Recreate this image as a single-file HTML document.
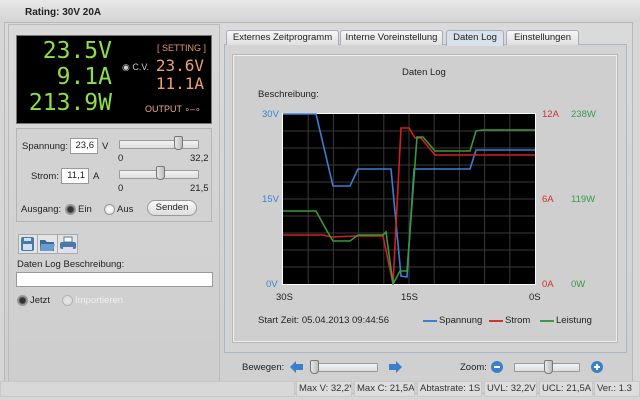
<!DOCTYPE html>
<html><head><meta charset="utf-8"><style>
*{margin:0;padding:0;box-sizing:border-box}
body{width:640px;height:400px;overflow:hidden;background:#d6d6d6;font-family:"Liberation Sans",sans-serif;font-size:9.5px;color:#222;position:relative;white-space:nowrap}
.a{position:absolute}
.lcd{font-family:"DejaVu Sans Mono","Liberation Mono",monospace}
.inp{background:#fff;border:1px solid #999;font-size:9.5px;text-align:right;padding-right:3px;line-height:14px}
.sl{height:9px;border:1px solid #9a9a9a;background:linear-gradient(#f2f2f2,#ddd);border-radius:1px}
.th{width:9px;height:14px;background:linear-gradient(90deg,#e8e8e8,#bcbcbc);border:1px solid #777;border-radius:2px 2px 4px 4px}
.rad{width:11px;height:11px;border-radius:50%;border:1px solid #999;background:radial-gradient(#fff,#ddd)}
.rad.on{background:radial-gradient(#333 40%,#888 60%,#ddd)}
.tab{top:30px;height:15px;border:1px solid #aab;border-bottom:none;background:linear-gradient(#f6f6f6,#e0e0e0);font-size:9.5px;text-align:center;line-height:14px;border-radius:3px 3px 0 0}
.st{top:381px;height:16px;border:1px solid #c8c8c8;background:#ddd;font-size:9.5px;line-height:14px;padding:0 3px;color:#333;overflow:hidden}
</style></head><body>
<div class="a" style="left:0;top:0;width:640px;height:22px;background:linear-gradient(#e8e8e8,#d4d4d4)"></div>
<div class="a" style="left:25px;top:7px;font-weight:bold;font-size:10px">Rating: 30V 20A</div>
<div class="a" style="left:4px;top:22px;width:629px;height:372px;border:1px solid #b8b8b8;background:linear-gradient(#dadada,#cfcfcf)"></div>
<!-- left panel -->
<div class="a" style="left:8px;top:24px;width:212px;height:367px;border:1px solid #bbb;background:linear-gradient(#d9d9d9,#cdcdcd)"></div>
<div class="a" style="left:16px;top:35px;width:196px;height:89px;background:#000;border:1px solid #777"></div>
<div class="a lcd" style="left:20px;top:38px;width:92px;text-align:right;color:#8ee04a;font-size:23px;line-height:26px">23.5V<br>9.1A<br>213.9W</div>
<div class="a" style="left:157px;top:43px;color:#e8956a;font-size:9px">[ SETTING ]</div>
<div class="a" style="left:122px;top:62px;color:#ccc;font-size:9px">◉ C.V.</div>
<div class="a lcd" style="left:150px;top:57px;width:54px;text-align:right;color:#f0a070;font-size:16px;line-height:18px">23.6V<br>11.1A</div>
<div class="a" style="left:145px;top:104px;color:#e8a888;font-size:9px">OUTPUT ∘–∘</div>
<div class="a" style="left:16px;top:128px;width:196px;height:94px;border:1px solid #b5b5b5;background:#d2d2d2"></div>
<div class="a" style="left:22px;top:141px">Spannung:</div>
<div class="a inp" style="left:70px;top:138px;width:28px;height:16px">23,6</div>
<div class="a" style="left:102px;top:141px">V</div>
<div class="a sl" style="left:119px;top:140px;width:80px"></div>
<div class="a th" style="left:174px;top:136px"></div>
<div class="a" style="left:118px;top:153px">0</div>
<div class="a" style="left:190px;top:153px">32,2</div>
<div class="a" style="left:31px;top:171px">Strom:</div>
<div class="a inp" style="left:61px;top:168px;width:28px;height:16px">11,1</div>
<div class="a" style="left:93px;top:171px">A</div>
<div class="a sl" style="left:119px;top:170px;width:80px"></div>
<div class="a th" style="left:156px;top:166px"></div>
<div class="a" style="left:118px;top:183px">0</div>
<div class="a" style="left:190px;top:183px">21,5</div>
<div class="a" style="left:21px;top:204px">Ausgang:</div>
<div class="a rad on" style="left:65px;top:204px"></div>
<div class="a" style="left:78px;top:204px">Ein</div>
<div class="a rad" style="left:104px;top:204px"></div>
<div class="a" style="left:117px;top:204px">Aus</div>
<div class="a" style="left:147px;top:200px;width:50px;height:16px;border:1px solid #999;border-radius:8px;background:linear-gradient(#fafafa,#ddd);text-align:center;line-height:14px">Senden</div>
<!-- icons -->
<div class="a" style="left:18px;top:234px;width:60px;height:20px;border:1px solid #aaa;background:#e4e4e4"></div>
<svg class="a" style="left:18px;top:234px" width="60" height="20">
<line x1="19.5" y1="0" x2="19.5" y2="20" stroke="#aaa"/><line x1="39.5" y1="0" x2="39.5" y2="20" stroke="#aaa"/>
<rect x="3" y="3" width="13" height="14" rx="2" fill="#4a78a8"/><rect x="5" y="10" width="9" height="6" fill="#cfe0f0"/><rect x="6" y="4" width="7" height="3" fill="#cfe0f0"/>
<path d="M22 6h5l2 2h7v9h-14z" fill="#3b6a9c"/><path d="M23 10h14l-2 7h-13z" fill="#6b9ccc"/>
<rect x="46" y="3" width="8" height="5" fill="#fff" stroke="#4a78a8"/><rect x="42" y="8" width="16" height="7" rx="2" fill="#4a78a8"/><rect x="45" y="13" width="10" height="5" fill="#dde"/>
</svg>
<div class="a" style="left:17px;top:259px">Daten Log Beschreibung:</div>
<div class="a" style="left:16px;top:272px;width:197px;height:15px;background:#fff;border:1px solid #999"></div>
<div class="a rad on" style="left:17px;top:295px"></div>
<div class="a" style="left:30px;top:295px">Jetzt</div>
<div class="a rad" style="left:62px;top:295px;opacity:.5"></div>
<div class="a" style="left:75px;top:295px;color:#eee">Importieren</div>
<!-- tabs -->
<div class="a" style="left:224px;top:44px;width:403px;height:309px;border:1px solid #a9b8c8;background:#d3d3d3"></div>
<div class="a tab" style="left:226px;width:113px">Externes Zeitprogramm</div>
<div class="a tab" style="left:340px;width:103px">Interne Voreinstellung</div>
<div class="a tab" style="left:446px;width:58px;background:#d8e2ec;height:16px">Daten Log</div>
<div class="a tab" style="left:506px;width:73px">Einstellungen</div>
<div class="a" style="left:233px;top:55px;width:384px;height:287px;border:1px solid #eee;background:#cfcfcf;outline:1px solid #b8b8b8"></div>
<div class="a" style="left:402px;top:67px">Daten Log</div>
<div class="a" style="left:258px;top:89px">Beschreibung:</div>
<div class="a" style="left:262px;top:109px;color:#3a80d0">30V</div>
<div class="a" style="left:262px;top:194px;color:#3a80d0">15V</div>
<div class="a" style="left:266px;top:279px;color:#3a80d0">0V</div>
<div class="a" style="left:542px;top:109px;color:#cc3333">12A</div>
<div class="a" style="left:542px;top:194px;color:#cc3333">6A</div>
<div class="a" style="left:542px;top:279px;color:#cc3333">0A</div>
<div class="a" style="left:571px;top:109px;color:#3a9a4a">238W</div>
<div class="a" style="left:571px;top:194px;color:#3a9a4a">119W</div>
<div class="a" style="left:571px;top:279px;color:#3a9a4a">0W</div>
<svg class="a" style="left:282px;top:113px" width="254" height="172">
<rect x="0.5" y="0.5" width="253" height="171" fill="#000" stroke="#fff"/>
<g transform="translate(1,1)" stroke="#3a3a3a" stroke-width="1">
<path d="M25.2 0V170M50.4 0V170M75.6 0V170M100.8 0V170M126 0V170M151.2 0V170M176.4 0V170M201.6 0V170M226.8 0V170M0 17H252M0 34H252M0 51H252M0 68H252M0 85H252M0 102H252M0 119H252M0 136H252M0 153H252"/>
</g>
<g transform="translate(1,1)" fill="none" stroke-width="1.6">
<polyline stroke="#3a7fd5" points="0,0 33,0 50,72 67,72 75,55 108,55 118,162 124,163 131,55 187,55 193,36 252,36"/>
<polyline stroke="#d42020" points="0,121 40,121 48,123 73,122 100,122 110,170 118,14 126,14 132,24 138,24 152,41 252,41"/>
<polyline stroke="#3a9a3a" points="0,97 33,97 44,117 50,127 67,127 75,121 100,121 103,118 110,170 117,157 124,157 134,23 140,23 152,37 187,37 193,17 200,16 252,16"/>
</g>
</svg>
<div class="a" style="left:276px;top:292px">30S</div>
<div class="a" style="left:401px;top:292px">15S</div>
<div class="a" style="left:529px;top:292px">0S</div>
<div class="a" style="left:258px;top:315px">Start Zeit: 05.04.2013 09:44:56</div>
<div class="a" style="left:423px;top:320px;width:14px;height:2px;background:#3a80d0"></div>
<div class="a" style="left:439px;top:315px">Spannung</div>
<div class="a" style="left:489px;top:320px;width:14px;height:2px;background:#cc3333"></div>
<div class="a" style="left:505px;top:315px">Strom</div>
<div class="a" style="left:540px;top:320px;width:14px;height:2px;background:#3a9a4a"></div>
<div class="a" style="left:556px;top:315px">Leistung</div>
<!-- bottom controls -->
<div class="a" style="left:242px;top:362px">Bewegen:</div>
<svg class="a" style="left:290px;top:361px" width="14" height="12"><path d="M0 6L6 0V3H13V9H6V12Z" fill="#3a80c8"/></svg>
<div class="a sl" style="left:310px;top:363px;width:68px"></div>
<div class="a th" style="left:310px;top:360px"></div>
<svg class="a" style="left:388px;top:361px" width="14" height="12"><path d="M14 6L8 0V3H1V9H8V12Z" fill="#3a80c8"/></svg>
<div class="a" style="left:460px;top:362px">Zoom:</div>
<svg class="a" style="left:491px;top:361px" width="12" height="12"><circle cx="6" cy="6" r="6" fill="#3a80c8"/><rect x="3" y="5" width="6" height="2" fill="#fff"/></svg>
<div class="a sl" style="left:514px;top:363px;width:66px"></div>
<div class="a th" style="left:544px;top:360px"></div>
<svg class="a" style="left:591px;top:361px" width="12" height="12"><circle cx="6" cy="6" r="6" fill="#3a80c8"/><rect x="3" y="5" width="6" height="2" fill="#fff"/><rect x="5" y="3" width="2" height="6" fill="#fff"/></svg>
<!-- status -->
<div class="a st" style="left:0;width:295px;background:#d8d8d8"></div>
<div class="a st" style="left:296px;width:56px;padding:0 2px">Max V: 32,2V</div>
<div class="a st" style="left:354px;width:61px;padding:0 2px">Max C: 21,5A</div>
<div class="a st" style="left:417px;width:65px;padding:0 2px">Abtastrate: 1S</div>
<div class="a st" style="left:484px;width:53px;padding:0 2px">UVL: 32,2V</div>
<div class="a st" style="left:539px;width:54px;padding:0 2px">UCL: 21,5A</div>
<div class="a st" style="left:594px;width:46px;padding:0 2px">Ver.: 1.3</div>
</body></html>
